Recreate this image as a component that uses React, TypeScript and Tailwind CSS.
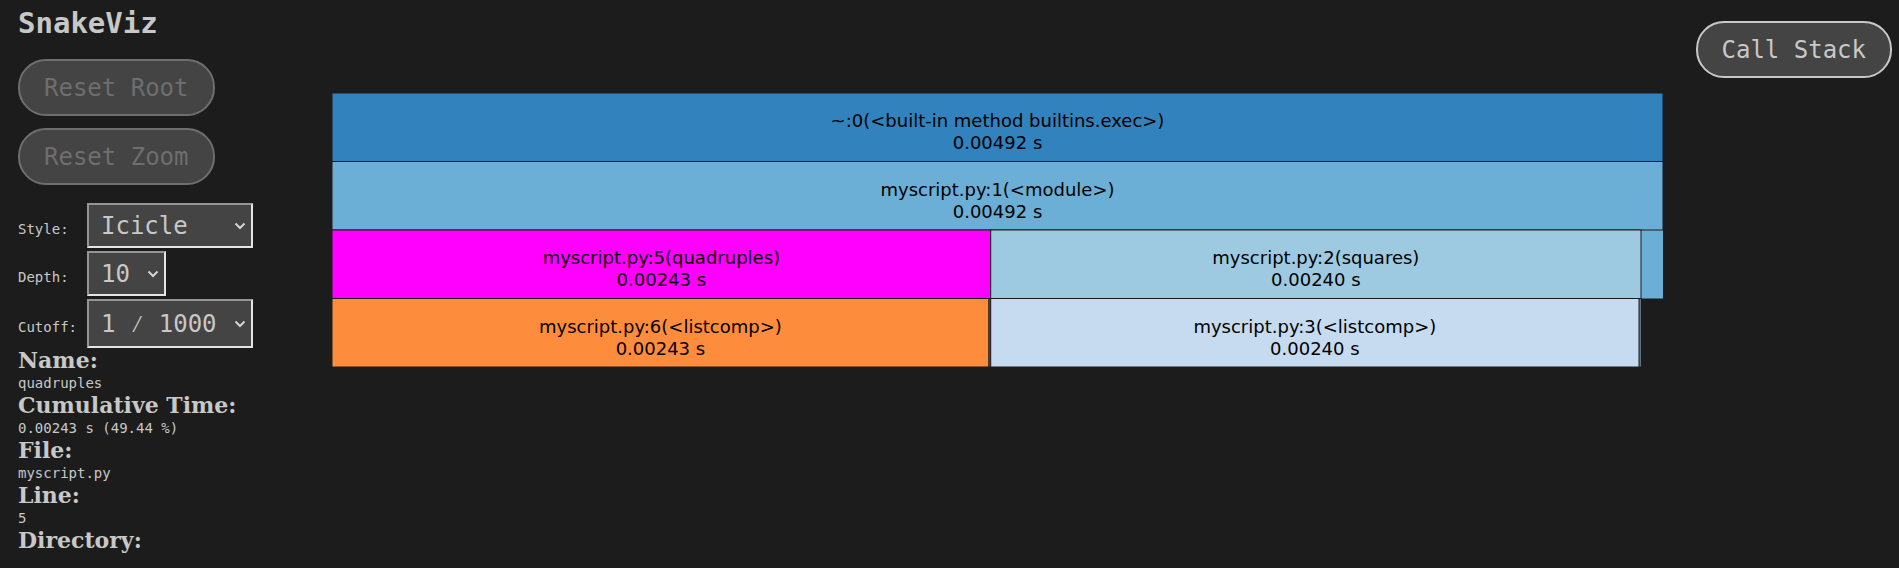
import { useState } from "react";

type Block = {
  x: number;
  row: number;
  width: number;
  fill: string;
  label?: string;
  time?: string;
  bare?: boolean;
};

const TOP = 1;
const ROW = 68.5;

const blocks: Block[] = [
  { x: 0, row: 0, width: 1331, fill: "#3182bd", label: "~:0(<built-in method builtins.exec>)", time: "0.00492 s" },
  { x: 1309, row: 2, width: 22, fill: "#6baed6", bare: true },
  { x: 0, row: 1, width: 1331, fill: "#6baed6", label: "myscript.py:1(<module>)", time: "0.00492 s" },
  { x: 0, row: 2, width: 658.7, fill: "#ff00ff", label: "myscript.py:5(quadruples)", time: "0.00243 s" },
  { x: 658.7, row: 2, width: 650.3, fill: "#9ecae1", label: "myscript.py:2(squares)", time: "0.00240 s" },
  { x: 656.8, row: 3, width: 1.9, fill: "#ff00ff" },
  { x: 1307, row: 3, width: 2, fill: "#9ecae1" },
  { x: 0, row: 3, width: 656.8, fill: "#fd8d3c", label: "myscript.py:6(<listcomp>)", time: "0.00243 s" },
  { x: 658.7, row: 3, width: 648.3, fill: "#c6dbef", label: "myscript.py:3(<listcomp>)", time: "0.00240 s" },
];

const details = [
  { term: "Name:", value: "quadruples" },
  { term: "Cumulative Time:", value: "0.00243 s (49.44 %)" },
  { term: "File:", value: "myscript.py" },
  { term: "Line:", value: "5" },
  { term: "Directory:", value: "" },
];

const pill =
  "h-[57px] rounded-[28px] border-2 border-[#c8c8c8] bg-[#444444] px-6 text-2xl leading-7 text-[#c8c8c8] disabled:border-[#6e6e6e] disabled:text-[#6e6e6e]";

function Icicle() {
  return (
    <svg viewBox="0 0 1331 276" className="block w-full overflow-visible" role="group">
      {blocks.map((b) => (
        <rect
          key={`${b.row}-${b.x}`}
          x={b.x}
          y={TOP + b.row * ROW}
          width={b.width}
          height={ROW}
          fill={b.fill}
          stroke={b.bare ? "none" : "#1c1c1c"}
        />
      ))}
      {blocks
        .filter((b) => b.label)
        .map((b) => {
          const y = TOP + b.row * ROW;
          const center = b.x + b.width / 2;
          return (
            <text
              key={b.label}
              textAnchor="middle"
              className="fill-black font-['DejaVu_Sans',sans-serif] text-lg"
            >
              <tspan x={center} y={y + 34}>{b.label}</tspan>
              <tspan x={center} y={y + 56}>{b.time}</tspan>
            </text>
          );
        })}
    </svg>
  );
}

type PickerProps = {
  id: string;
  label: string;
  value: string;
  options: string[];
  size: string;
  onChange: (value: string) => void;
};

function Picker({ id, label, value, options, size, onChange }: PickerProps) {
  return (
    <>
      <label htmlFor={id}>{label}</label>
      <div className={`relative ${size}`}>
        <select
          id={id}
          value={value}
          onChange={(e) => onChange(e.target.value)}
          className="block h-full w-full appearance-none border-2 border-t-[#959595] border-r-[#e4e4e4] border-b-[#e4e4e4] border-l-[#959595] bg-[#444444] pl-3 text-2xl text-[#c8c8c8]"
        >
          {options.map((o) => (
            <option key={o}>{o}</option>
          ))}
        </select>
        <svg
          viewBox="0 0 12 8"
          className="pointer-events-none absolute inset-y-0 right-[7px] my-auto h-2 w-3 fill-none stroke-[#d4d4d4] stroke-2"
          aria-hidden="true"
        >
          <path d="M1.5 1.5 6 6l4.5-4.5" />
        </svg>
      </div>
    </>
  );
}

export default function App() {
  const [style, setStyle] = useState("Icicle");
  const [depth, setDepth] = useState("10");
  const [cutoff, setCutoff] = useState("1 ⁄ 1000");

  return (
    <div className="flex min-h-screen bg-[#1c1c1c] font-['DejaVu_Sans_Mono','Liberation_Mono',monospace] text-sm text-[#c8c8c8]">
      <aside className="w-[332px] shrink-0 pl-[18px]">
        <h1 className="pt-1.5 text-[29px] leading-[34px] font-bold">SnakeViz</h1>
        <div className="mt-[19px] flex flex-col items-start gap-3">
          <button type="button" disabled className={pill}>Reset Root</button>
          <button type="button" disabled className={pill}>Reset Zoom</button>
        </div>
        <form className="mt-[18px] grid grid-cols-[66px_auto] items-baseline justify-start justify-items-start gap-[3px]">
          <Picker id="style" label="Style:" value={style} options={["Icicle", "Sunburst"]} size="h-[45px] w-[166px]" onChange={setStyle} />
          <Picker id="depth" label="Depth:" value={depth} options={["3", "5", "10", "15", "20"]} size="h-[45px] w-[79px]" onChange={setDepth} />
          <Picker id="cutoff" label="Cutoff:" value={cutoff} options={["1 ⁄ 1000", "1 ⁄ 100", "0"]} size="h-[49px] w-[166px]" onChange={setCutoff} />
        </form>
        <dl>
          {details.map((d) => (
            <div key={d.term}>
              <dt className="font-['DejaVu_Serif',serif] text-[22px] leading-[25px] font-bold">{d.term}</dt>
              <dd className="h-5 leading-5">{d.value}</dd>
            </div>
          ))}
        </dl>
      </aside>
      <main className="min-w-0 flex-1 pt-[92px]">
        <Icicle />
      </main>
      <div className="flex w-[236px] shrink-0 items-start justify-end pt-[21px] pr-[7px]">
        <button type="button" className={pill}>Call Stack</button>
      </div>
    </div>
  );
}
